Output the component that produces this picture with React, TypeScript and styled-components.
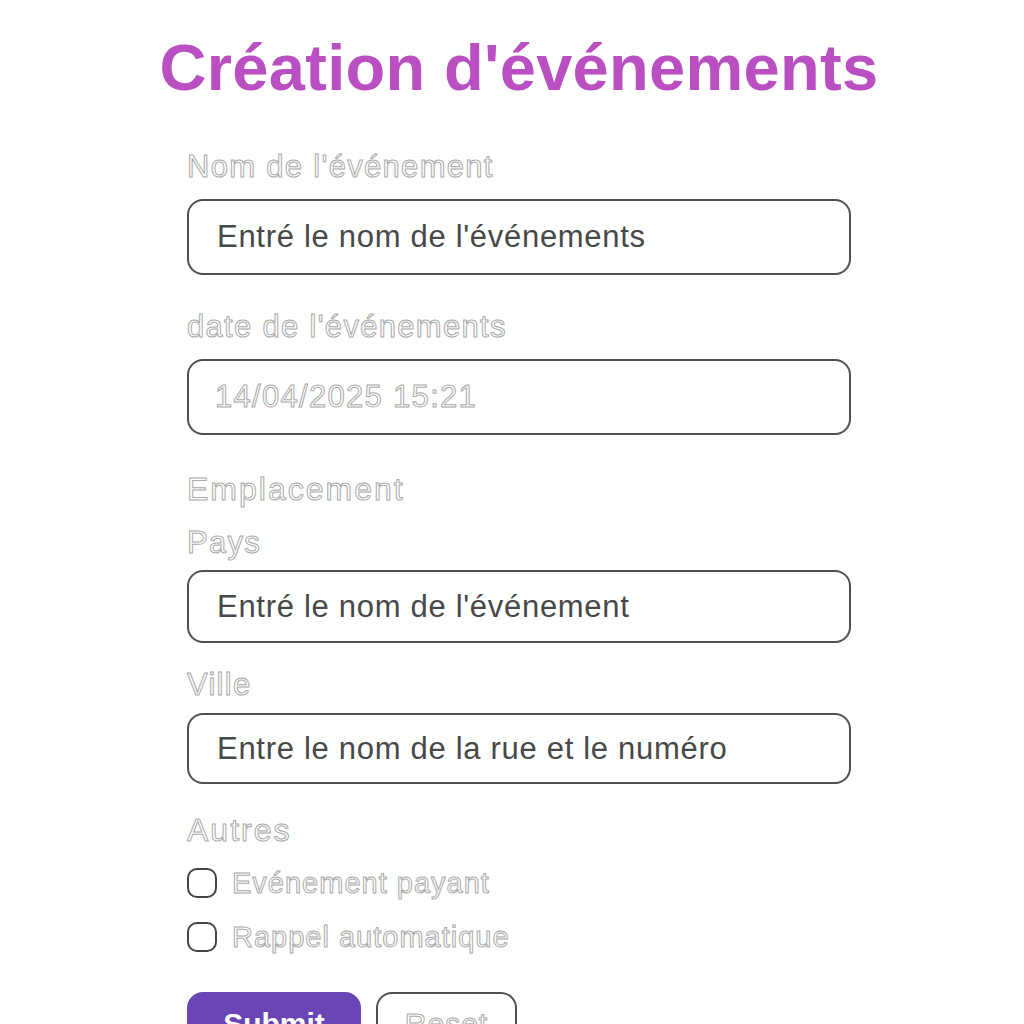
import React, { useState } from 'react';
import styled, { createGlobalStyle } from 'styled-components';

const GlobalStyle = createGlobalStyle`
  body {
    margin: 0;
    background: #ffffff;
    font-family: "Liberation Sans", Arial, sans-serif;
  }
`;

const EventForm = () => {
  const [paid, setPaid] = useState<boolean>(false);
  const [reminder, setReminder] = useState<boolean>(false);

  return (
    <>
      <GlobalStyle />
      <Page>
        <Title>Création d'événements</Title>
        <Form onSubmit={(e) => e.preventDefault()}>
          <Label $top={0} $bottom={14}>Nom de l'événement</Label>
          <Field $h={76}>
            <Value>Entré le nom de l'événements</Value>
          </Field>

          <Label $top={34} $bottom={14}>date de l'événements</Label>
          <Field $h={76}>
            <Placeholder>14/04/2025 15:21</Placeholder>
          </Field>

          <Section $top={36} $bottom={18}>Emplacement</Section>
          <Label $top={0} $bottom={9}>Pays</Label>
          <Field $h={73}>
            <Value>Entré le nom de l'événement</Value>
          </Field>

          <Label $top={24} $bottom={10}>Ville</Label>
          <Field $h={71}>
            <Value>Entre le nom de la rue et le numéro</Value>
          </Field>

          <Section $top={28} $bottom={17}>Autres</Section>
          <CheckRow onClick={() => setPaid(!paid)}>
            <Box $checked={paid} />
            <CheckText>Evénement payant</CheckText>
          </CheckRow>
          <CheckRow onClick={() => setReminder(!reminder)}>
            <Box $checked={reminder} />
            <CheckText>Rappel automatique</CheckText>
          </CheckRow>

          <Buttons>
            <SubmitButton type="submit">Submit</SubmitButton>
            <ResetButton type="reset">Reset</ResetButton>
          </Buttons>
        </Form>
      </Page>
    </>
  );
};

export default EventForm;

const Page = styled.div`
  display: flex;
  flex-direction: column;
  align-items: center;
  padding-left: 14px;
  height: 1024px;
  overflow: hidden;
  box-sizing: border-box;
`;

const Title = styled.h1`
  margin: 28px 0 0;
  font-family: "Liberation Sans", Arial, sans-serif;
  font-weight: 700;
  font-size: 65px;
  line-height: 80px;
  color: #b94fc0;
  letter-spacing: 0.3px;
`;

const Form = styled.form`
  width: 664px;
  margin-top: 41px;
  display: flex;
  flex-direction: column;
`;

const outlined = `
  color: #ffffff;
  -webkit-text-stroke: 1px #a9a9a9;
`;

const Label = styled.div<{ $top: number; $bottom: number }>`
  margin-top: ${(p) => p.$top}px;
  margin-bottom: ${(p) => p.$bottom}px;
  font-size: 31px;
  line-height: 36px;
  letter-spacing: 1.3px;
  ${outlined}
`;

const Section = styled(Label)`
  font-size: 32px;
  letter-spacing: 2px;
`;

const Field = styled.div<{ $h: number }>`
  height: ${(p) => p.$h}px;
  box-sizing: border-box;
  border: 2px solid #505050;
  border-radius: 16px;
  display: flex;
  align-items: center;
  padding: 0 28px;
`;

const Value = styled.span`
  font-size: 31px;
  letter-spacing: 0.7px;
  color: #484848;
`;

const Placeholder = styled.span`
  margin-left: -2px;
  font-size: 31px;
  letter-spacing: 1.3px;
  ${outlined}
`;

const CheckRow = styled.label`
  display: flex;
  align-items: center;
  gap: 15px;
  height: 36px;
  margin-bottom: 18px;
  cursor: pointer;
`;

const Box = styled.span<{ $checked: boolean }>`
  width: 30px;
  height: 30px;
  box-sizing: border-box;
  border: 2px solid #444444;
  border-radius: 10px;
  background: ${(p) => (p.$checked ? '#6a45b5' : '#ffffff')};
`;

const CheckText = styled.span`
  font-size: 29px;
  letter-spacing: 1px;
  ${outlined}
`;

const Buttons = styled.div`
  display: flex;
  gap: 15px;
  margin-top: 19px;
`;

const SubmitButton = styled.button`
  width: 174px;
  height: 64px;
  border: none;
  border-radius: 16px;
  background: #6a45b5;
  color: #ffffff;
  font-family: "Liberation Sans", Arial, sans-serif;
  font-size: 30px;
  font-weight: 700;
  padding: 0;
`;

const ResetButton = styled.button`
  width: 141px;
  height: 64px;
  border: 2px solid #505050;
  border-radius: 16px;
  background: #ffffff;
  font-family: "Liberation Sans", Arial, sans-serif;
  font-size: 30px;
  letter-spacing: 1px;
  padding: 0;
  ${outlined}
`;
